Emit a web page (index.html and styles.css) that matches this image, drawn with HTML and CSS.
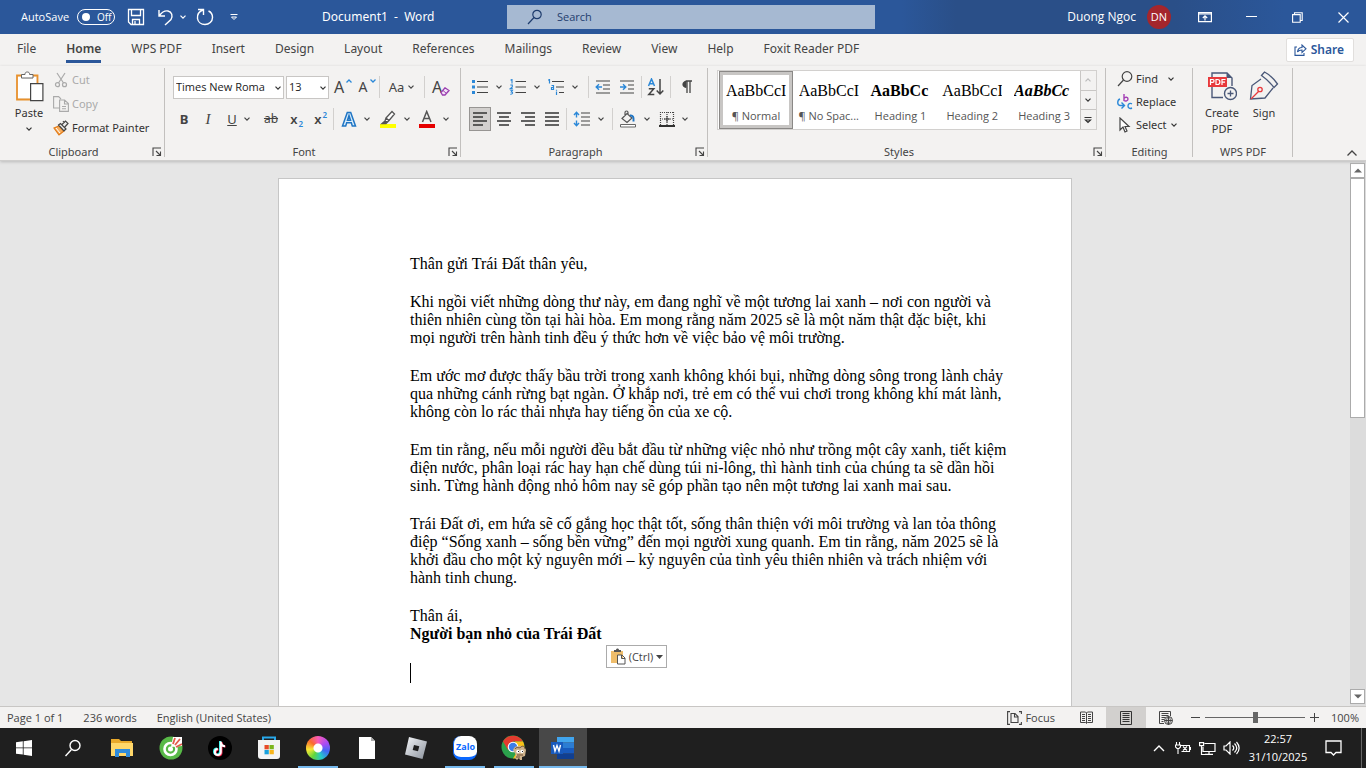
FILE: index.html
```html
<!DOCTYPE html>
<html lang="vi">
<head>
<meta charset="utf-8">
<meta name="viewport" content="width=device-width, initial-scale=1">
<title>Document1 - Word</title>
<link rel="stylesheet" href="styles.css">
</head>
<body>
<svg class="defs" aria-hidden="true">
  <symbol id="chev" viewBox="0 0 8 8"><path d="M1.500 2.700 4 5.200l2.500-2.500" fill="none" stroke="currentColor" stroke-width="1.200"/></symbol>
  <symbol id="launch" viewBox="0 0 10 10"><path d="M1 9V1h8M4 4l4 4M8.500 4.500v4h-4" fill="none" stroke="#444" stroke-width="1.100"/></symbol>
</svg>
<div class="app">
  <header class="titlebar">
    <div class="title-left">
      <label class="autosave">AutoSave <span class="toggle"><input type="checkbox" class="toggle-input"><span class="knob"></span>Off</span></label>
      <button class="tb" aria-label="Save"><svg width="18" height="18" viewBox="0 0 18 18" fill="none" stroke="#fff" stroke-width="1.300"><path d="M1.500 1.500h15v15H4l-2.500-2.500zM4.500 1.500v6h9v-6M5.500 16.500v-5h7v5M8 13v3"/></svg></button>
      <button class="tb undo" aria-label="Undo"><svg width="18" height="18" viewBox="0 0 18 18" fill="none" stroke="#fff" stroke-width="1.400"><path d="M2 2v6h6M2.500 7.500C5 4 8 2.500 11 3c4 .8 5 5 3 8.500L8 17"/></svg><svg class="chev"><use href="#chev"/></svg></button>
      <button class="tb redo" aria-label="Repeat"><svg width="18" height="18" viewBox="0 0 18 18" fill="none" stroke="#fff" stroke-width="1.400"><path d="M2 1.500h5.500V7M7 2C3 3.500 1 6 1.500 10.500 2 14 5 16.500 9 16.500s7.500-3 7.500-7c0-3-1.500-5.500-4-6.500"/></svg></button>
      <button class="tb more" aria-label="Customize Quick Access Toolbar"><svg width="8" height="8" viewBox="0 0 8 8" fill="none" stroke="#fff"><path d="M.5 1.500h7M1.500 4 4 6.500 6.500 4z"/></svg></button>
      <h1 class="doc-title">Document1&nbsp; -&nbsp; Word</h1>
    </div>
    <label class="search"><svg width="16" height="16" viewBox="0 0 16 16" fill="none" stroke="#1f3d6e" stroke-width="1.200"><circle cx="10" cy="5.500" r="4.200"/><path d="M7 8.500 1 15"/></svg><input type="text" placeholder="Search" aria-label="Search"></label>
    <div class="title-right">
      <span>Duong Ngoc</span><span class="avatar">DN</span>
      <button class="win ribbon-opt" aria-label="Ribbon Display Options"><svg width="14" height="12" viewBox="0 0 14 12" fill="none" stroke="#fff" stroke-width="1.200"><path d="M.6 1.600h12.800v9H.6zM1 3h12M7 9.500V5M4.800 7 7 4.800 9.200 7"/></svg></button>
      <button class="win" aria-label="Minimize"><svg width="11" height="11" viewBox="0 0 11 11" stroke="#fff"><path d="M0 4.500h11"/></svg></button>
      <button class="win" aria-label="Restore"><svg width="11" height="11" viewBox="0 0 11 11" fill="none" stroke="#fff" stroke-width="1.100"><path d="M.6 2.600h7.600v7.600H.6zM2.500 2.500V.8h7.700v7.700H8.500"/></svg></button>
      <button class="win" aria-label="Close"><svg width="11" height="11" viewBox="0 0 11 11" stroke="#fff" stroke-width="1.200"><path d="m.5.5 10 10M10.500.5l-10 10"/></svg></button>
    </div>
  </header>

  <nav class="tabs" aria-label="Ribbon tabs">
    <a class="tab" href="#">File</a><a class="tab active" href="#">Home</a><a class="tab" href="#">WPS PDF</a><a class="tab" href="#">Insert</a><a class="tab" href="#">Design</a><a class="tab" href="#">Layout</a><a class="tab" href="#">References</a><a class="tab" href="#">Mailings</a><a class="tab" href="#">Review</a><a class="tab" href="#">View</a><a class="tab" href="#">Help</a><a class="tab" href="#">Foxit Reader PDF</a>
    <button class="share"><svg width="13" height="12" viewBox="0 0 13 12" fill="none" stroke="#2b579a" stroke-width="1.100"><path d="M3 3H1v8.400h9V9M3.500 8c.3-3 2-4.500 4.500-4.500V1l4 3.800L8 8.500V6C6 6 4.500 6.500 3.500 8z"/></svg>Share</button>
  </nav>

  <section class="ribbon" aria-label="Home ribbon">
    <div class="group clipboard">
      <div class="group-body">
        <button class="big paste"><svg width="29" height="32" viewBox="0 0 29 32" fill="none"><path d="M7 4.500H2v24h13M18 4.500h4.500V12" stroke="#e8912d" stroke-width="1.800"/><path d="M3 6h3v2h12V6h3v6h-6v15H3z" fill="#fff"/><path d="M6.500 7V3.500H10C10 1.500 11 1 12.300 1s2.300.5 2.300 2.500H18V7z" fill="#fff" stroke="#666"/><path d="M15.600 12.600h12.300v17H15.600z" fill="#fff" stroke="#444" stroke-width="1.200"/></svg>Paste<svg class="chev"><use href="#chev"/></svg></button>
        <div class="stack">
          <button class="item off"><svg width="16" height="16" viewBox="0 0 16 16" fill="none" stroke="#aaa" stroke-width="1.200"><path d="m4 1 6.500 10M12 1 5.500 11"/><circle cx="4.500" cy="12.700" r="2"/><circle cx="11.500" cy="12.700" r="2"/></svg>Cut</button>
          <button class="item off"><svg width="16" height="16" viewBox="0 0 16 16" fill="none" stroke="#aaa" stroke-width="1.100"><path d="M6.500 12H.6V.6h5L8 3M6.600 4h5l3.800 3.500V15.400H6.600zM11.500 4v4h4M9 10.500h4M9 12.800h4"/></svg>Copy</button>
          <button class="item"><svg width="16" height="16" viewBox="0 0 16 16" fill="none"><path d="m1 8 5-2 5 5-5 4z" fill="#f7ad5e" stroke="#e27a16" stroke-width="1.200"/><path d="m3 8 4 5" stroke="#fff"/><path d="m5.500 5 2-1.500L13 9l-2 1.800zM9 4.500 12.500 1 15 3.500 11.800 7M10 1l1.500 2" fill="#eee" stroke="#444" stroke-width="1.200"/></svg>Format Painter</button>
        </div>
      </div>
      <div class="group-label">Clipboard<button class="launcher" aria-label="Clipboard settings"><svg width="10" height="10"><use href="#launch"/></svg></button></div>
    </div>

    <div class="group font">
      <div class="group-body rows">
        <div class="row">
          <span class="combo font-name"><select aria-label="Font"><option>Times New Roma</option></select><svg class="chev"><use href="#chev"/></svg></span>
          <span class="combo font-size"><select aria-label="Font size"><option>13</option></select><svg class="chev"><use href="#chev"/></svg></span>
          <button class="ic glyph grow" aria-label="Increase font size">A<svg class="corner" viewBox="0 0 6 4"><path d="m.5 3.500L3 1l2.500 2.500" fill="none" stroke="#2b88d8" stroke-width="1.300"/></svg></button>
          <button class="ic glyph shrink" aria-label="Decrease font size">A<svg class="corner" viewBox="0 0 6 4"><path d="M.5.5 3 3 5.500.5" fill="none" stroke="#2b88d8" stroke-width="1.300"/></svg></button>
          <i class="sep"></i>
          <button class="ic split case" aria-label="Change case">Aa<svg class="chev"><use href="#chev"/></svg></button>
          <i class="sep"></i>
          <button class="ic glyph clear" aria-label="Clear formatting">A<svg class="eraser" width="10" height="9" viewBox="0 0 10 9"><path d="m1 5.500 4-4.700 4 2.700L5 8H2.500z" fill="#f3e4f7" stroke="#9b3fb0" stroke-width="1.300"/><path d="m3 3.500 3.500 3" stroke="#9b3fb0"/></svg></button>
        </div>
        <div class="row">
          <button class="ic bold">B</button><button class="ic italic">I</button><button class="ic split under"><u>U</u><svg class="chev"><use href="#chev"/></svg></button><button class="ic strike"><s>ab</s></button><button class="ic script" aria-label="Subscript">x<sub>2</sub></button><button class="ic script" aria-label="Superscript">x<sup>2</sup></button>
          <i class="sep"></i>
          <button class="ic split wide" aria-label="Text effects"><svg width="16" height="16" viewBox="0 0 16 16"><path d="M1.500 15 6.300 1.500h3.400L14.500 15h-3.200l-1-3.200H5.700L4.700 15zM6.500 9.300h3L8 4.500z" fill="#d9ecfa" stroke="#1f75c4" stroke-width="1.500"/></svg><svg class="chev"><use href="#chev"/></svg></button>
          <button class="ic split wide" aria-label="Highlight"><svg width="18" height="18" viewBox="0 0 18 18"><path d="M1 14h16v4H1z" fill="#ff0"/><path d="M7 8 13 1.500 15.500 4 10 10.500zM7 8l-1 3-3 2.500h4L10 10.500" fill="#fff" stroke="#555" stroke-width="1.300"/><path d="m6 11-2.500 2h4L9 11z" fill="#555"/></svg><svg class="chev"><use href="#chev"/></svg></button>
          <button class="ic split wide" aria-label="Font color"><svg width="18" height="18" viewBox="0 0 18 18"><path d="M4.500 12 8.700 1.500 13 12M6 8.500h5.500" fill="none" stroke="#555" stroke-width="1.500"/><path d="M1 14h16v4H1z" fill="#e60000"/></svg><svg class="chev"><use href="#chev"/></svg></button>
        </div>
      </div>
      <div class="group-label">Font<button class="launcher" aria-label="Font settings"><svg width="10" height="10"><use href="#launch"/></svg></button></div>
    </div>

    <div class="group paragraph">
      <div class="group-body rows">
        <div class="row row-lists">
          <button class="ic split" aria-label="Bullets"><svg width="18" height="16" viewBox="0 0 18 16"><path d="M1 1h3v3H1zM1 6.500h3v3H1zM1 12h3v3H1z" fill="#2b88d8"/><path d="M6 2.500h11M6 8h11M6 13.500h11" stroke="#444" stroke-width="1.200"/></svg><svg class="chev"><use href="#chev"/></svg></button>
          <button class="ic split" aria-label="Numbering"><svg width="18" height="16" viewBox="0 0 18 16"><path d="M1.500 1.200 3 .5v4M1.300 6h2v2l-2 1.600h2.400M1.200 11.200h2.300L2.300 13c2 0 1.700 2.500-1 2.200" fill="none" stroke="#2b88d8" stroke-width="1.100"/><path d="M6.500 2.500H17M6.500 8H17M6.500 13.500H17" stroke="#444" stroke-width="1.200"/></svg><svg class="chev"><use href="#chev"/></svg></button>
          <button class="ic split" aria-label="Multilevel list"><svg width="18" height="16" viewBox="0 0 18 16"><path d="M1.200 1.200 2.500.5v4M4.500 6.500h2v4h-2v-2h2M9.500 12.500V16M9.500 10.800v1" fill="none" stroke="#2b88d8" stroke-width="1.200"/><path d="M5 2.500h12M9 8h8M12 13.500h5" stroke="#444" stroke-width="1.200"/></svg><svg class="chev"><use href="#chev"/></svg></button>
          <i class="sep after-lists"></i>
          <button class="ic" aria-label="Decrease indent"><svg width="16" height="14" viewBox="0 0 16 14"><path d="M1 1h14M8 5h7M8 9h7M1 13h14" stroke="#444" stroke-width="1.200"/><path d="M7 7H1.500M4 4.300 1.200 7 4 9.700" fill="none" stroke="#2b88d8" stroke-width="1.400"/></svg></button>
          <button class="ic" aria-label="Increase indent"><svg width="16" height="14" viewBox="0 0 16 14"><path d="M1 1h14M9 5h6M9 9h6M1 13h14" stroke="#444" stroke-width="1.200"/><path d="M1 7h5.500M4 4.300 6.800 7 4 9.700" fill="none" stroke="#2b88d8" stroke-width="1.400"/></svg></button>
          <i class="sep"></i>
          <button class="ic sort" aria-label="Sort"><svg width="18" height="18" viewBox="0 0 18 18" fill="none" stroke-width="1.500"><path d="M1.500 8 4.500 1l3 7M2.500 5.800h4" stroke="#2b88d8"/><path d="M1.800 10.700h5L1.800 16.500h5.500M13 1v15M9.700 12.500 13 16l3.300-3.500" stroke="#444"/></svg></button>
          <i class="sep"></i>
          <button class="ic marks" aria-label="Show marks"><svg width="12" height="14" viewBox="0 0 12 14"><path d="M5 7.500A3.500 3.500 0 0 1 5 1h6M6 1v12M9 1v12" fill="none" stroke="#444" stroke-width="1.300"/><path d="M5.500 1v6.500C0 8 0 1 5.500 1z" fill="#444"/></svg></button>
        </div>
        <div class="row">
          <button class="ic selected" aria-label="Align left"><svg width="16" height="14" viewBox="0 0 16 14" stroke="#333" stroke-width="1.300"><path d="M1 1h14M1 5h10M1 9h14M1 13h10"/></svg></button>
          <button class="ic" aria-label="Center"><svg width="16" height="14" viewBox="0 0 16 14" stroke="#333" stroke-width="1.300"><path d="M1 1h14M3 5h10M1 9h14M3 13h10"/></svg></button>
          <button class="ic" aria-label="Align right"><svg width="16" height="14" viewBox="0 0 16 14" stroke="#333" stroke-width="1.300"><path d="M1 1h14M5 5h10M1 9h14M5 13h10"/></svg></button>
          <button class="ic" aria-label="Justify"><svg width="16" height="14" viewBox="0 0 16 14" stroke="#333" stroke-width="1.300"><path d="M1 1h14M1 5h14M1 9h14M1 13h14"/></svg></button>
          <i class="sep"></i>
          <button class="ic split wide" aria-label="Line spacing"><svg width="18" height="16" viewBox="0 0 18 16" fill="none"><path d="M8 2h9M8 6h9M8 10h9M8 14h9" stroke="#444" stroke-width="1.200"/><path d="M3.500 1.500v5M3.500 9.500v5M1 4l2.500-2.700L6 4M1 12l2.500 2.700L6 12" stroke="#2b88d8" stroke-width="1.400"/></svg><svg class="chev"><use href="#chev"/></svg></button>
          <i class="sep after-spacing"></i>
          <button class="ic split wide" aria-label="Shading"><svg width="18" height="18" viewBox="0 0 18 18" fill="none"><path d="m3 8.500 5-5L13 8l-5 4.500zM6 6V2.500C6 .5 9 .5 9 2.500V5" stroke="#555" stroke-width="1.200"/><path d="M11 5.500c3-.5 4 1.500 3.500 6" stroke="#1f75c4" stroke-width="2"/><path d="M1.500 14.500h15v2.500h-15z" fill="#fff" stroke="#666"/></svg><svg class="chev"><use href="#chev"/></svg></button>
          <button class="ic split wide" aria-label="Borders"><svg width="16" height="16" viewBox="0 0 16 16" fill="none"><path d="M1 1.500h14M1 8h14M1.500 1v13M8 1v13M14.500 1v13" stroke="#444" stroke-width="1.200" stroke-dasharray="1 1"/><path d="M8 5v6M5 8h6" stroke="#444"/><path d="M0 15h16" stroke="#000" stroke-width="1.600"/></svg><svg class="chev"><use href="#chev"/></svg></button>
        </div>
      </div>
      <div class="group-label">Paragraph<button class="launcher" aria-label="Paragraph settings"><svg width="10" height="10"><use href="#launch"/></svg></button></div>
    </div>

    <div class="group styles">
      <div class="group-body">
        <div class="gallery">
          <button class="style chosen"><span class="sample">AaBbCcI</span><span>¶ Normal</span></button>
          <button class="style"><span class="sample">AaBbCcI</span><span>¶ No Spac...</span></button>
          <button class="style"><span class="sample heavy">AaBbCc</span><span>Heading 1</span></button>
          <button class="style"><span class="sample">AaBbCcI</span><span>Heading 2</span></button>
          <button class="style"><span class="sample heavy slant">AaBbCc</span><span>Heading 3</span></button>
          <div class="spin">
            <button aria-label="Previous styles" disabled><svg class="chev up"><use href="#chev"/></svg></button>
            <button aria-label="Next styles"><svg class="chev"><use href="#chev"/></svg></button>
            <button aria-label="More styles"><svg width="8" height="8" viewBox="0 0 8 8" fill="none" stroke="#333" stroke-width="1.200"><path d="M.5 1.500h7M1.500 4 4 6.500 6.500 4z"/></svg></button>
          </div>
        </div>
      </div>
      <div class="group-label">Styles<button class="launcher" aria-label="Styles settings"><svg width="10" height="10"><use href="#launch"/></svg></button></div>
    </div>

    <div class="group editing">
      <div class="group-body">
        <div class="stack">
          <button class="item find"><svg width="16" height="16" viewBox="0 0 16 16" fill="none" stroke="#444" stroke-width="1.200"><circle cx="10" cy="5.500" r="4.800"/><path d="M6.500 9 1 15"/></svg>Find<svg class="chev"><use href="#chev"/></svg></button>
          <button class="item"><svg width="16" height="16" viewBox="0 0 16 16" fill="none" stroke-width="1.400"><path d="M7 0v7M7 4.500C8 2.500 11 3 11 5S8.500 7.500 7 6.500" stroke="#a33eb5"/><path d="M15 9.800c-2-1-4 0-4 2.200s2 3 4 2M3 5C0 6 0 11 3 11.500h4M4.500 8.500l3 3-3 3" stroke="#2b88d8"/></svg>Replace</button>
          <button class="item select"><svg width="16" height="16" viewBox="0 0 16 16" fill="#fff" stroke="#444" stroke-width="1.200"><path d="M3 1v12l3-3 2 5 2-1-2-4.500h4z"/></svg>Select<svg class="chev"><use href="#chev"/></svg></button>
        </div>
      </div>
      <div class="group-label">Editing</div>
    </div>

    <div class="group wps">
      <div class="group-body">
        <button class="big"><svg width="30" height="32" viewBox="0 0 30 32" fill="none"><path d="M5 6V2h15l5 5v8M5 15v11.500h11" stroke="#4a5878" stroke-width="1.400"/><path d="M19.500 2v5H25z" fill="#4a5878"/><path d="M1 6h19v10H1z" fill="#e8393c"/><path d="M3.500 14V8.500h2.300c1.600 0 1.600 2.800 0 2.800H3.500M9 8.500h1.500c3.200 0 3.200 5 0 5H9zM15 14V8.500h3.500M15 11.200h3" stroke="#fff" stroke-width="1.200"/><circle cx="23.500" cy="22.500" r="6" fill="#f3f2f1" stroke="#4a5878" stroke-width="1.400"/><path d="M20.500 22.500h6M23.500 19.500v6" stroke="#4a5878" stroke-width="1.300"/></svg><span>Create<br>PDF</span></button>
        <button class="big"><svg width="30" height="32" viewBox="0 0 30 32" fill="none" stroke="#4a5878" stroke-width="1.300"><path d="m12.500 4.500 3-3.500c5 2.500 9 6.500 13 12L25 16.500c-4-5-8-9-12.500-12zM12 8 3 14.500 1.500 28 16 27l8-10"/><path d="m2 28 8-8" stroke="#e8393c"/><circle cx="11" cy="18.500" r="2.200" stroke="#e8393c"/></svg>Sign</button>
      </div>
      <div class="group-label">WPS PDF</div>
    </div>
    <div class="ribbon-end"><button class="collapse" aria-label="Collapse the Ribbon"><svg width="12" height="8" viewBox="0 0 12 8" fill="none" stroke="#444" stroke-width="1.300"><path d="m1.500 6.500 4.500-4.500 4.500 4.500"/></svg></button></div>
  </section>

  <main class="workspace">
    <div class="canvas">
      <article class="page">
        <p>Thân gửi Trái Đất thân yêu,</p>
        <p>Khi ngồi viết những dòng thư này, em đang nghĩ về một tương lai xanh – nơi con người và<br>thiên nhiên cùng tồn tại hài hòa. Em mong rằng năm 2025 sẽ là một năm thật đặc biệt, khi<br>mọi người trên hành tinh đều ý thức hơn về việc bảo vệ môi trường.</p>
        <p>Em ước mơ được thấy bầu trời trong xanh không khói bụi, những dòng sông trong lành chảy<br>qua những cánh rừng bạt ngàn. Ở khắp nơi, trẻ em có thể vui chơi trong không khí mát lành,<br>không còn lo rác thải nhựa hay tiếng ồn của xe cộ.</p>
        <p>Em tin rằng, nếu mỗi người đều bắt đầu từ những việc nhỏ như trồng một cây xanh, tiết kiệm<br>điện nước, phân loại rác hay hạn chế dùng túi ni-lông, thì hành tinh của chúng ta sẽ dần hồi<br>sinh. Từng hành động nhỏ hôm nay sẽ góp phần tạo nên một tương lai xanh mai sau.</p>
        <p>Trái Đất ơi, em hứa sẽ cố gắng học thật tốt, sống thân thiện với môi trường và lan tỏa thông<br>điệp “Sống xanh – sống bền vững” đến mọi người xung quanh. Em tin rằng, năm 2025 sẽ là<br>khởi đầu cho một kỷ nguyên mới – kỷ nguyên của tình yêu thiên nhiên và trách nhiệm với<br>hành tinh chung.</p>
        <p class="sign-off">Thân ái,<br><strong>Người bạn nhỏ của Trái Đất</strong><button class="paste-opt"><svg width="16" height="17" viewBox="0 0 16 17" fill="none"><path d="M1 3h12v12H1z" fill="#efbd6b"/><path d="M4 4V2h2c0-2 3-2 3 0h2v2z" fill="#555"/><path d="M7.500 7h4.500l3 3v6H7.500zM11.500 7v3.500H15" fill="#fff" stroke="#555"/></svg>(Ctrl)<svg width="7" height="4" viewBox="0 0 7 4"><path d="M0 0h7L3.500 4z" fill="#444"/></svg></button></p>
        <div class="caret"></div>
      </article>
    </div>
    <div class="scrollbar">
      <button aria-label="Scroll up"><svg width="8" height="5" viewBox="0 0 8 5"><path d="M0 4.500h8L4 .5z" fill="#666"/></svg></button>
      <div class="track"><div class="thumb"></div></div>
      <button aria-label="Scroll down"><svg width="8" height="5" viewBox="0 0 8 5"><path d="M0 .5h8L4 4.500z" fill="#666"/></svg></button>
    </div>
  </main>

  <footer class="status">
    <span>Page 1 of 1</span><span>236 words</span><span>English (United States)</span>
    <div class="views">
      <button class="focus"><svg width="15" height="14" viewBox="0 0 15 14" fill="none" stroke="#444" stroke-width="1.100"><path d="M3 .6H.6V13.400H3M12 .6h2.400V3M12 13.400h2.400V11M4 2.500h4l3 3v6H4zM7.500 2.500V6H11"/></svg>Focus</button>
      <button class="view" aria-label="Read mode"><svg width="13" height="13" viewBox="0 0 13 13" fill="none" stroke="#444"><path d="M.5 1h5l1 1 1-1h5v10.500h-5l-1 1-1-1h-5zM6.500 2v10M2 3.500h3M2 5.500h3M2 7.500h3M2 9.500h3M8 3.500h3M8 5.500h3M8 7.500h3M8 9.500h3"/></svg></button>
      <button class="view current" aria-label="Print layout"><svg width="12" height="14" viewBox="0 0 12 14" fill="none" stroke="#333"><path d="M.5.5h11v13H.5zM2.500 2.500h7M2.500 4.500h7M2.500 6.500h7M2.500 8.500h7M2.500 10.500h7"/></svg></button>
      <button class="view" aria-label="Web layout"><svg width="14" height="14" viewBox="0 0 14 14" fill="none" stroke="#444"><path d="M5 12.500H.5v-12h11V5M2.500 2.500h7M2.500 4.500h7M2.500 6.500h4M2.500 8.500h3M2.500 10.500h2"/><circle cx="9.500" cy="9.500" r="4" fill="#f3f2f1"/><path d="M5.500 9.500h8M9.500 5.500v8M9.500 5.500c-2.500 2.500-2.500 5.500 0 8 2.500-2.500 2.500-5.500 0-8"/></svg></button>
      <div class="zoom"><button aria-label="Zoom out"><svg width="9" height="9" stroke="#444"><path d="M0 4.500h9"/></svg></button><input type="range" min="0" max="100" value="50" aria-label="Zoom"><button aria-label="Zoom in"><svg width="9" height="9" stroke="#444"><path d="M0 4.500h9M4.500 0v9"/></svg></button></div>
      <span class="percent">100%</span>
    </div>
  </footer>

  <div class="taskbar">
    <button class="task" aria-label="Start"><svg width="16" height="16" viewBox="0 0 16 16" fill="#fff"><path d="M0 2.200 6.800 1.300v6.200H0zM7.600 1.200 16 0v7.500H7.600zM0 8.300h6.800v6.300L0 13.700zM7.600 8.300H16V16l-8.400-1.200z"/></svg></button>
    <button class="task" aria-label="Search Windows"><svg width="18" height="18" viewBox="0 0 18 18" fill="none" stroke="#fff" stroke-width="1.400"><circle cx="11" cy="6.500" r="5"/><path d="m7.500 10.500-6 6.500"/></svg></button>
    <button class="task" aria-label="File Explorer"><svg width="24" height="24" viewBox="0 0 24 24"><path d="M1 3h8l2 2h11v15H1z" fill="#e9a92b"/><path d="M1 7h22v13H1z" fill="#ffd76a"/><path d="M5 13h15v8h-4v-4H9v4H5z" fill="#2f8bdb"/></svg></button>
    <button class="task" aria-label="Coc Coc"><svg width="24" height="24" viewBox="0 0 24 24"><circle cx="12" cy="12" r="11.500" fill="#58b947"/><circle cx="11.500" cy="13" r="6" fill="none" stroke="#fff" stroke-width="2.600"/><circle cx="11.500" cy="13" r="2.500" fill="#fff"/><path d="m12 11 2-10h9v9z" fill="#fff"/><path d="m14 8 2-6M16 9l5-6M17 11l6-3" stroke="#e45b4c" stroke-width="1.800"/></svg></button>
    <button class="task" aria-label="TikTok"><svg width="24" height="24" viewBox="0 0 24 24" fill="none"><circle cx="12" cy="12" r="12" fill="#000"/><g stroke-width="2"><path d="M12 5v10.500a3 3 0 1 1-3-3M12 6c.5 2.500 2.500 4 4.500 4" stroke="#25f4ee"/><path d="M13.500 6v10.500a3 3 0 1 1-3-3M13.500 7c.5 2.500 2 3.500 4 3.500" stroke="#fe2c55"/><path d="M12.800 5.500V16a3 3 0 1 1-3-3M12.800 6.500c.5 2.500 2.400 3.700 4.200 3.700" stroke="#fff"/></g></svg></button>
    <button class="task" aria-label="Microsoft Store"><svg width="24" height="24" viewBox="0 0 24 24"><path d="M6 5V1.500h12V5" fill="none" stroke="#28a8ea" stroke-width="2"/><path d="M1 4h22v16c0 2-1 3-3 3H4c-2 0-3-1-3-3z" fill="#f3f3f3"/><path d="M7.500 9h4.300v4.300H7.500z" fill="#e74a27"/><path d="M12.500 9h4.300v4.300h-4.300z" fill="#7bb51c"/><path d="M7.500 14h4.300v4.300H7.500z" fill="#18a0dd"/><path d="M12.500 14h4.300v4.300h-4.300z" fill="#f8b51a"/></svg></button>
    <button class="task open" aria-label="Color browser"><span class="rainbow"></span></button>
    <button class="task" aria-label="Blank file"><svg width="16" height="22" viewBox="0 0 16 22"><path d="M0 0h12l4 4v18H0z" fill="#fff"/><path d="M12 0v4h4z" fill="#aaa"/></svg></button>
    <button class="task" aria-label="Roblox"><svg width="24" height="24" viewBox="0 0 24 24"><defs><linearGradient id="rb" x2="1" y2="1"><stop stop-color="#f5f7fa"/><stop offset="1" stop-color="#8b929c"/></linearGradient></defs><path d="m5 1 18 4.500L18.500 23 1 18.500zM10 9l-1.300 5 5.300 1.300 1.300-5z" fill="url(#rb)" fill-rule="evenodd"/></svg></button>
    <button class="task open" aria-label="Zalo"><span class="zalo">Zalo</span></button>
    <button class="task open" aria-label="Chrome"><svg width="26" height="26" viewBox="0 0 26 26"><circle cx="12" cy="12" r="11.500" fill="#2ba24c"/><path d="M2 6.500A11.500 11.500 0 0 1 22 6.500H12L7 15z" fill="#e33b2e"/><path d="M22 6.500A11.500 11.500 0 0 1 12 23.500L17 15 14 6.500z" fill="#fbc116"/><circle cx="12" cy="12" r="5.300" fill="#fff"/><circle cx="12" cy="12" r="4.200" fill="#3c7de8"/><path d="M12 15c2-5 4-3 6-4 3-1 6 1 7 4l-1 6-3 1v3h-2l-1-2-2 2-2-2 1-3z" fill="#d0b48c"/><path d="M14 14c2-3 4 0 6-2s4 0 4 2M16 20h6M15 22h4" stroke="#6b4c35" fill="none"/><circle cx="17" cy="16.500" r="1.700" fill="#fff"/><circle cx="21" cy="16.500" r="1.700" fill="#fff"/><path d="M17 16.500h1M21 16.500h1" stroke="#222"/></svg></button>
    <button class="task open word" aria-label="Word"><svg width="24" height="22" viewBox="0 0 24 22"><path d="M6 0h17v5.500H6z" fill="#41a5ee"/><path d="M6 5.500h17V11H6z" fill="#2b7cd3"/><path d="M6 11h17v5.500H6z" fill="#185abd"/><path d="M6 16.500h17V22H6z" fill="#103f91"/><path d="M0 5h12v12H0z" fill="#185abd"/><path d="m2.500 8 1.500 6 2-5.500L8 14l1.500-6" fill="none" stroke="#fff" stroke-width="1.400"/></svg></button>
    <div class="tray">
      <button aria-label="Hidden icons"><svg width="12" height="8" viewBox="0 0 12 8" fill="none" stroke="#fff" stroke-width="1.400"><path d="M1 7 6 2l5 5"/></svg></button>
      <button aria-label="Battery"><svg width="16" height="12" viewBox="0 0 16 12" fill="none" stroke="#fff"><path d="M5.500 3.500h9v6h-8M15.500 5v3M1.500 0v3M4.500 0v3M.5 3h5v2L4 6.500H2L.5 5zM3 6.500V12M8 4.500l4 4M12 4.500l-4 4" stroke-width="1.100"/></svg></button>
      <button aria-label="Network"><svg width="17" height="14" viewBox="0 0 17 14" fill="none" stroke="#fff" stroke-width="1.200"><path d="M5.500 2.500H16v8H4V6M.6 1.600h4v3h-4zM2.500 4.500v9h8M10 10.500v3M6 13.400h8"/></svg></button>
      <button aria-label="Volume"><svg width="17" height="14" viewBox="0 0 17 14" fill="none" stroke="#fff" stroke-width="1.200"><path d="M1 5h2l4-4v12L3 9H1zM9.500 4.500c1.500 1.500 1.500 3.500 0 5M11.500 2.500c3 3 3 6 0 9M13.500 1c3.500 4 3.500 8 0 12"/></svg></button>
      <div class="clock"><time>22:57</time><span>31/10/2025</span></div>
      <button aria-label="Notifications"><svg width="17" height="16" viewBox="0 0 17 16" fill="none" stroke="#fff" stroke-width="1.300"><path d="M1 1h15v11.500h-5L8.500 15 6 12.500H1z"/></svg></button>
      <i class="desktop-edge"></i>
    </div>
  </div>
</div>
</body>
</html>
```
FILE: styles.css
```css
* { box-sizing: border-box; }
body { margin: 0; font: 11px/16px "Open Sans", "Noto Sans", sans-serif; color: #333; }
button { font: inherit; color: inherit; background: none; border: 0; padding: 0; display: flex; align-items: center; justify-content: center; }
svg { display: block; flex: none; }
.defs { position: absolute; width: 0; height: 0; }
.chev { width: 8px; height: 8px; }
.up { transform: rotate(180deg); }
.app { height: 100vh; display: flex; flex-direction: column; overflow: hidden; }

.titlebar { flex: none; height: 34px; display: grid; grid-template-columns: 507fr 368px 491fr; align-items: center; background: linear-gradient(90deg, #2b579a 66%, #2a4f88 70%, #2a4f88 86%, #2b579a 94%); color: #fff; }
.title-left { display: flex; align-items: center; padding-left: 21px; }
.autosave { display: flex; align-items: center; gap: 8px; }
.toggle { display: flex; align-items: center; gap: 7px; width: 38px; height: 16px; border: 1px solid #fff; border-radius: 8px; padding-left: 4px; font-size: 10px; }
.toggle-input { position: absolute; opacity: 0; margin: 0; }
.knob { width: 8px; height: 8px; border-radius: 50%; background: #fff; }
.tb { margin-left: 12px; }
.undo { gap: 4px; }
.redo { margin-left: 9px; }
.more { margin-left: 16px; }
.doc-title { margin: 0 0 0 84px; font: 400 12px/16px "Noto Sans", sans-serif; }
.search { display: flex; align-items: center; gap: 14px; height: 24px; padding-left: 20px; background: #a6b9d2; }
.search input { flex: 1; min-width: 0; border: 0; padding: 0; background: none; font: inherit; outline: 0; }
.search input::placeholder { color: #1f3d6e; opacity: 1; }
.title-right { display: flex; align-items: center; justify-content: flex-end; font-size: 12px; }
.avatar { width: 24px; height: 24px; margin-left: 11px; border-radius: 50%; background: #a4262c; font-size: 11px; line-height: 24px; text-align: center; }
.win { width: 46px; height: 32px; }
.ribbon-opt { margin-left: 11px; }

.tabs { flex: none; display: flex; align-items: center; gap: 30px; height: 32px; padding: 0 12px 0 17px; background: #f3f2f1; font: 12px/24px "Noto Sans", sans-serif; }
.tab { height: 26px; color: #444; text-decoration: none; white-space: nowrap; border-bottom: 3px solid transparent; }
.active { border-color: #2b579a; font-weight: 600; }
.share { gap: 4px; height: 24px; margin-left: auto; padding: 0 9px 0 7px; background: #fff; border: 1px solid #e1dfdd; border-radius: 2px; color: #2b579a; font-weight: 600; }

.ribbon { flex: none; display: flex; height: 95px; background: #f3f2f1; border-bottom: 1px solid #cfcecd; box-shadow: 0 1px 3px #bbb; z-index: 1; font-family: "Noto Sans", sans-serif; }
.group { display: flex; flex-direction: column; position: relative; }
.group::after { content: ""; position: absolute; right: 0; top: 2px; bottom: 3px; width: 1px; background: #c2c0be; }
.group-body { display: flex; flex: 1; }
.group-label { position: relative; height: 16px; text-align: center; color: #444; }
.launcher { position: absolute; right: 3px; top: 3px; }
.clipboard { width: 165px; }
.clipboard .group-label { padding-right: 18px; }
.font { width: 296px; }
.font .group-label, .paragraph .group-label { padding-right: 18px; }
.paragraph { width: 247px; }
.styles { flex: 1; min-width: 398px; }
.styles .group-label { padding-right: 16px; }
.editing { width: 87px; }
.wps { width: 100px; }
.ribbon-end { display: flex; width: 73px; align-items: flex-end; justify-content: flex-end; padding: 0 8px 3px 0; }

.big { flex-direction: column; justify-content: flex-start; padding-top: 5px; gap: 2px; color: #333; }
.paste { width: 58px; }
.paste .chev { margin-top: 2px; }
.stack { display: flex; flex-direction: column; padding-top: 2px; }
.item { height: 24px; gap: 3px; justify-content: flex-start; white-space: nowrap; }
.clipboard .stack { margin-left: -5px; }
.off { color: #aaa; }
.editing .stack { padding: 1px 0 0 11px; }
.editing .item { height: 23px; }
.find .chev { margin-left: 6px; }
.wps .big { width: 42px; }
.wps .group-body { padding-left: 8px; }

.rows { flex-direction: column; padding: 9px 0 0 7px; gap: 8px; }
.row { display: flex; align-items: center; height: 24px; }
.ic { width: 24px; height: 24px; font-size: 13px; color: #444; }
.split { width: 38px; gap: 6px; }
.wide { width: 39px; gap: 6px; }
.sep { width: 1px; height: 22px; margin: 0 2px; background: #d2d0ce; }
.combo { position: relative; height: 23px; margin-left: 1px; }
.combo select { appearance: none; width: 100%; height: 100%; padding: 0 0 0 2px; border: 1px solid #c8c6c4; border-radius: 0; background: #fff; font: 11px/16px "Open Sans", sans-serif; color: #222; }
.combo .chev { position: absolute; right: 2px; top: 8px; }
.font-name { width: 111px; }
.font-size { width: 43px; margin-left: 2px; }
.glyph { position: relative; font-size: 16px; padding-right: 4px; }
.shrink { font-size: 14px; }
.corner { position: absolute; right: 1px; top: 4px; width: 6px; height: 4px; }
.case { width: 40px; gap: 3px; }
.eraser { position: absolute; right: 1px; bottom: 3px; }
.bold { font-weight: 700; }
.italic { font-family: "Liberation Serif", serif; font-style: italic; font-size: 15px; }
.strike { font-size: 12px; margin-left: 1px; }
.script { position: relative; font-weight: 600; padding-right: 2px; }
.script sub, .script sup { position: absolute; right: 4px; font-size: 8px; line-height: 8px; color: #2b88d8; }
.script sub { bottom: 3px; }
.script sup { top: 4px; }
.selected { width: 22px; margin: 0 1px; background: #d2d0ce; border: 1px solid #979593; }
.after-spacing { margin-left: 4px; }
.after-lists { margin-left: 6px; }
.marks { margin-left: 2px; }

.styles .group-body { padding: 4px 9px 0; }
.gallery { display: flex; width: 380px; height: 60px; padding-left: 1px; border: 1px solid #d2d0ce; background: #fff; }
.style { flex: 1; min-width: 0; flex-direction: column; padding-top: 4px; gap: 7px; color: #555; font-family: "Open Sans", sans-serif; overflow: hidden; white-space: nowrap; }
.chosen { border: 1px solid #8a8886; box-shadow: inset 0 0 0 3px #c8c6c4; }
.sample { width: 60px; overflow: hidden; font: 16px/20px "Liberation Serif", serif; color: #000; text-align: left; }
.heavy { font-weight: 700; }
.slant { font-style: italic; }
.spin { display: flex; flex-direction: column; width: 16px; background: #f3f2f1; border-left: 1px solid #c8c6c4; }
.spin button { flex: 1; }
.spin button + button { border-top: 1px solid #c8c6c4; }
.spin button:disabled { color: #bbb; }

.workspace { flex: 1; min-height: 0; display: flex; background: #e6e6e6; }
.canvas { flex: 1; min-width: 0; display: flex; justify-content: center; padding-top: 17px; }
.page { width: 794px; padding: 76px 20px 0 131px; background: #fff; border: 1px solid #c6c6c6; border-bottom: 0; font: 16px/18px "Liberation Serif", "Times New Roman", serif; color: #000; white-space: nowrap; overflow: hidden; }
.page p { margin: 0 0 20px; }
.sign-off { position: relative; }
.paste-opt { position: absolute; left: 196px; top: 38px; width: 61px; height: 23px; gap: 3px; border: 1px solid #ababab; background: #fff; font: 11px/16px "Open Sans", sans-serif; color: #444; }
.caret { width: 1px; height: 20px; background: #000; }
.scrollbar { flex: none; width: 16px; display: flex; flex-direction: column; padding: 2px 1px 2px 0; background: #dcdcdc; }
.scrollbar button { height: 15px; background: #fff; border: 1px solid #ababab; }
.track { flex: 1; }
.thumb { height: 47%; background: #fff; border: 1px solid #ababab; }

.status { flex: none; display: flex; align-items: center; gap: 20px; height: 22px; padding-left: 7px; background: #f3f2f1; border-top: 1px solid #c8c6c4; color: #444; white-space: nowrap; }
.views { display: flex; align-items: center; align-self: stretch; margin-left: auto; }
.focus { gap: 3px; margin-right: 11px; }
.view { width: 40px; align-self: stretch; }
.current { background: #d2d0ce; }
.zoom { display: flex; align-items: center; gap: 5px; margin-left: 5px; }
.zoom input { appearance: none; width: 100px; height: 11px; margin: 0; background: linear-gradient(#666, #666) center / 100% 1px no-repeat; }
.zoom input::-webkit-slider-thumb { appearance: none; width: 5px; height: 11px; background: #666; }
.percent { width: 47px; padding-right: 7px; text-align: right; }

.taskbar { flex: none; display: flex; gap: 1px; height: 40px; background: #1f1f1f; color: #fff; }
.task { position: relative; width: 48px; height: 40px; }
.open::after { content: ""; position: absolute; left: 4px; right: 4px; bottom: 0; height: 2px; background: #76b9ed; }
.word { background: #484848; }
.word::after { left: 0; right: 0; }
.rainbow { width: 24px; height: 24px; border-radius: 50%; background: radial-gradient(circle, #fff 4px, transparent 5px), conic-gradient(#f95bb8, #a94bf5 60deg, #4168f5 110deg, #25c9c9 160deg, #62d63b 210deg, #f9e734 260deg, #fa6b2d 310deg, #f95bb8); }
.zalo { width: 24px; height: 24px; border-radius: 8px; background: #fff; border-bottom: 3px solid #0a68ff; border-left: 1px solid #0a68ff; color: #0a68ff; font-size: 9px; font-weight: 700; line-height: 21px; text-align: center; }
.tray { display: flex; align-items: center; margin-left: auto; }
.tray button { width: 24px; height: 40px; }
.clock { display: flex; flex-direction: column; align-items: center; width: 70px; line-height: 18px; }
.tray .clock + button { width: 40px; }
.desktop-edge { width: 5px; height: 40px; margin-left: 8px; border-left: 1px solid #666; }
```
